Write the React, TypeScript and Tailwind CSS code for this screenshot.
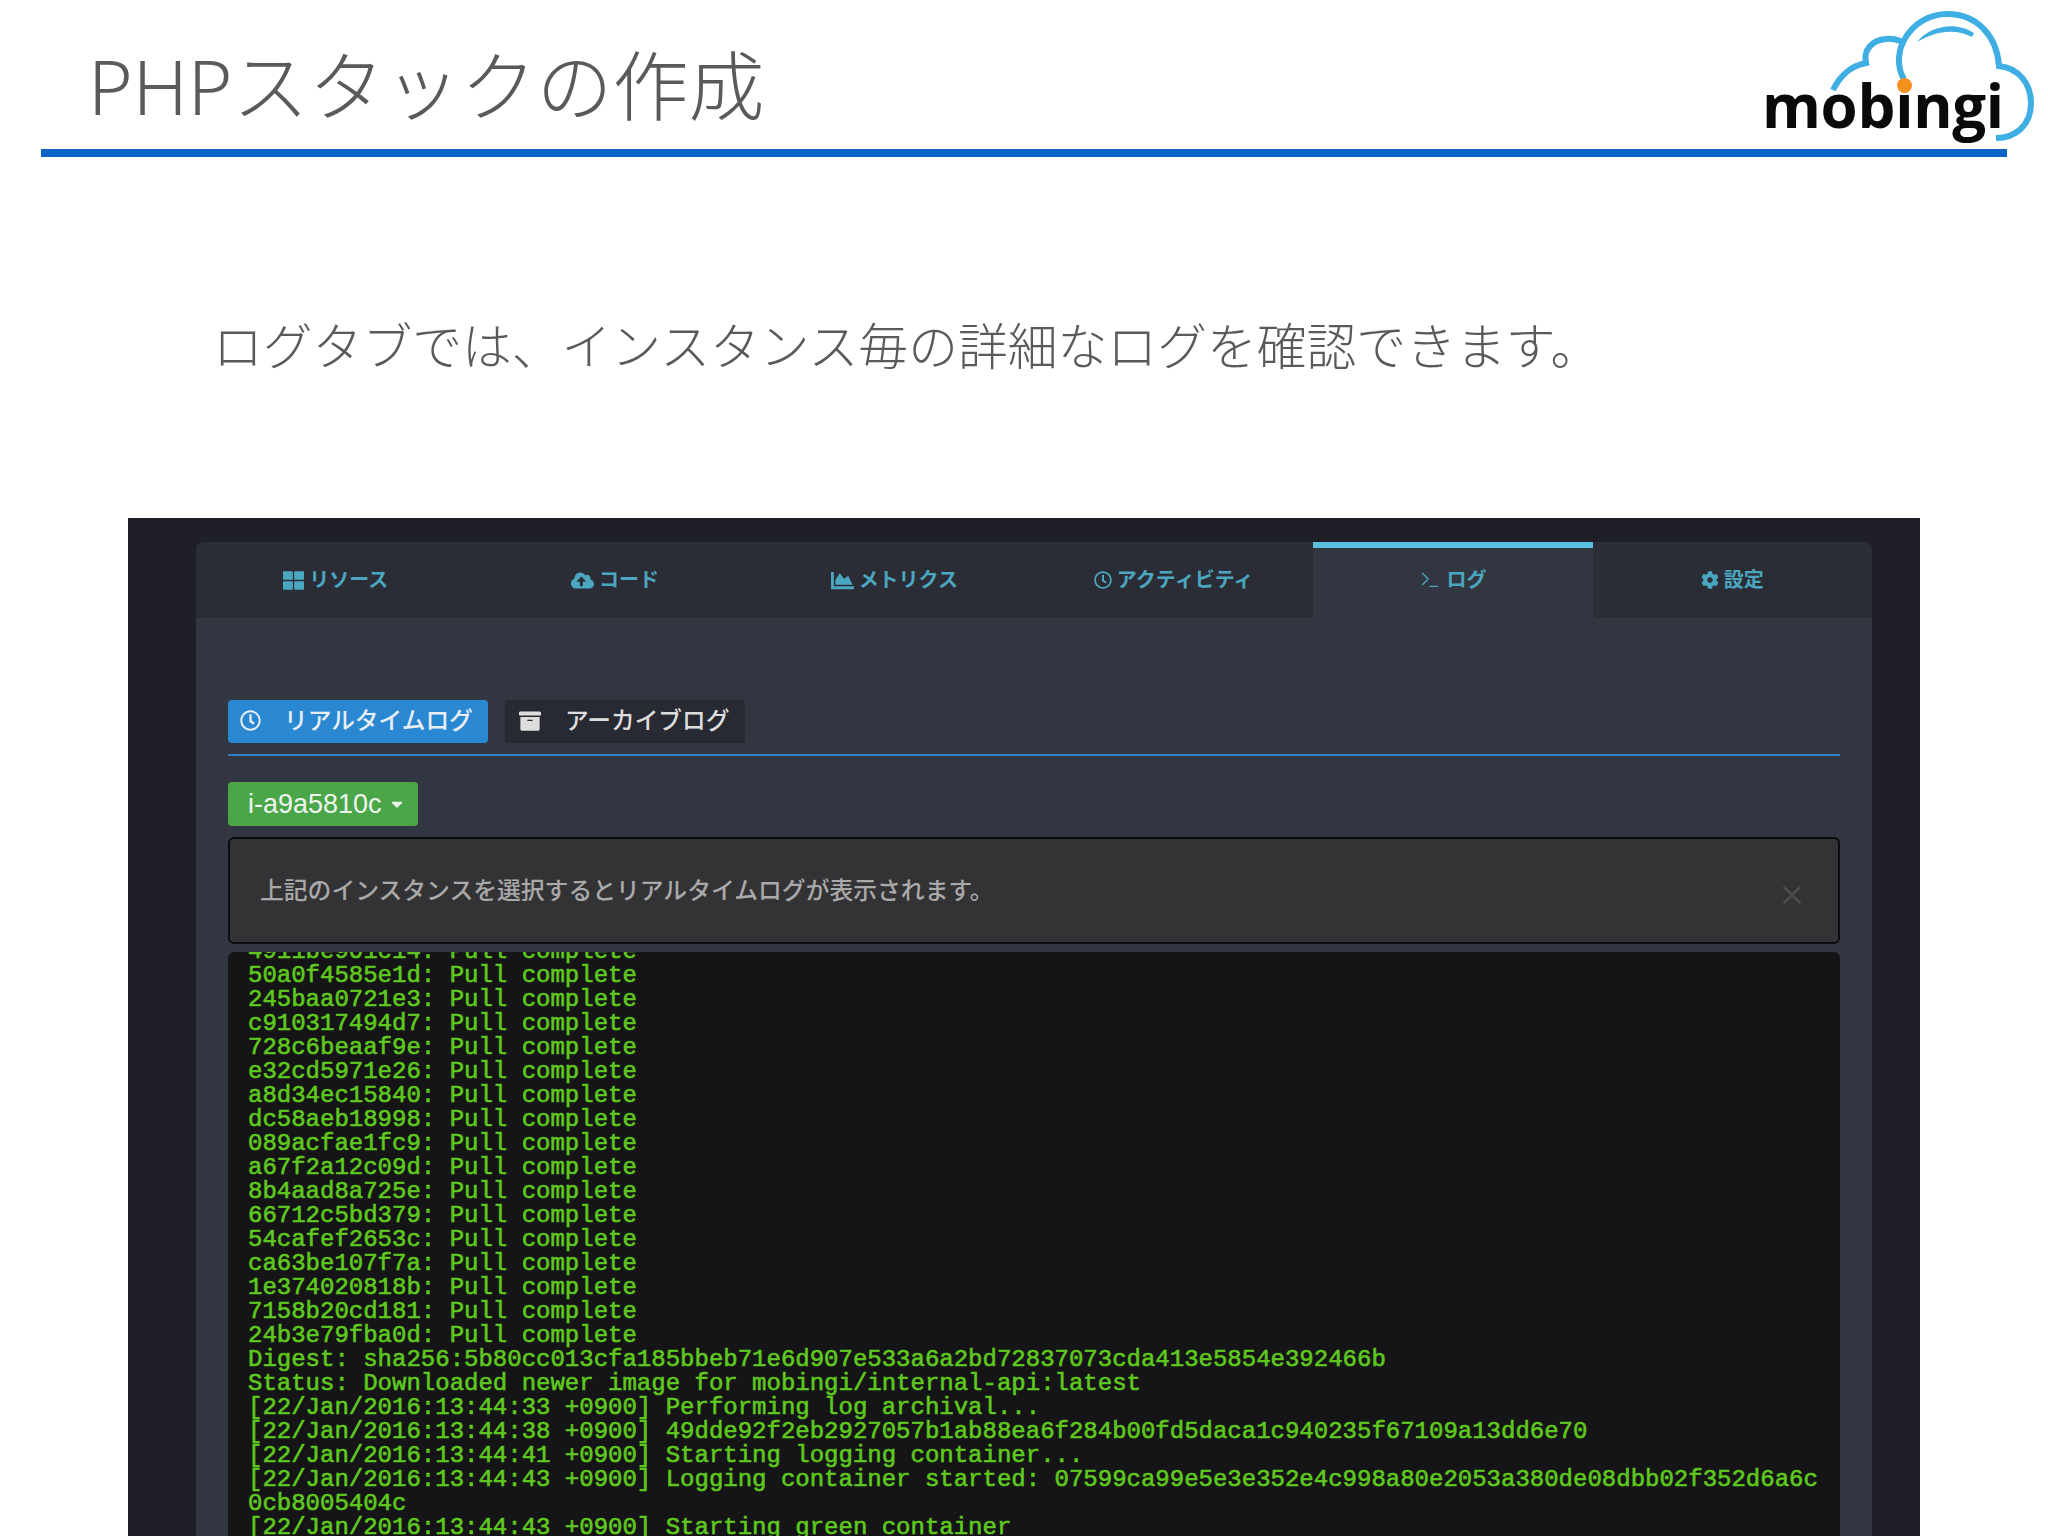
import React from "react";
import { FaThLarge, FaCloudUploadAlt, FaChartArea, FaRegClock, FaCog, FaArchive, FaCaretDown } from "react-icons/fa";
import { Terminal, X } from "lucide-react";

const sans = "font-['Noto_Sans','Noto_Sans_CJK_JP',sans-serif]";

const tabs = [
  { label: "リソース", icon: <FaThLarge className="w-[21px] h-[21px]" /> },
  { label: "コード", icon: <FaCloudUploadAlt className="w-[23px] h-[23px]" /> },
  { label: "メトリクス", icon: <FaChartArea className="w-[23px] h-[23px]" /> },
  { label: "アクティビティ", icon: <FaRegClock className="w-[18px] h-[18px]" /> },
  { label: "ログ", icon: <Terminal className="w-[22px] h-[22px]" strokeWidth={1.5} />, active: true },
  { label: "設定", icon: <FaCog className="w-[18px] h-[18px]" />, last: true },
];

const pulled = [
  "50a0f4585e1d",
  "245baa0721e3",
  "c910317494d7",
  "728c6beaaf9e",
  "e32cd5971e26",
  "a8d34ec15840",
  "dc58aeb18998",
  "089acfae1fc9",
  "a67f2a12c09d",
  "8b4aad8a725e",
  "66712c5bd379",
  "54cafef2653c",
  "ca63be107f7a",
  "1e374020818b",
  "7158b20cd181",
  "24b3e79fba0d",
];

const logLines = [
  "4911be901c14: Pull complete",
  ...pulled.map((id) => `${id}: Pull complete`),
  "Digest: sha256:5b80cc013cfa185bbeb71e6d907e533a6a2bd72837073cda413e5854e392466b",
  "Status: Downloaded newer image for mobingi/internal-api:latest",
  "[22/Jan/2016:13:44:33 +0900] Performing log archival...",
  "[22/Jan/2016:13:44:38 +0900] 49dde92f2eb2927057b1ab88ea6f284b00fd5daca1c940235f67109a13dd6e70",
  "[22/Jan/2016:13:44:41 +0900] Starting logging container...",
  "[22/Jan/2016:13:44:43 +0900] Logging container started: 07599ca99e5e3e352e4c998a80e2053a380de08dbb02f352d6a6c",
  "0cb8005404c",
  "[22/Jan/2016:13:44:43 +0900] Starting green container",
];

const Logo = () => (
  <div className="absolute left-[1700px] top-0 w-[348px] h-[170px]">
    <svg viewBox="0 0 348 170" className="absolute inset-0 w-full h-full" fill="none">
      <path
        d="M133 90C141 74 151 66 166 63C163 50 172 40 186 39C192 38 198 40 203 42C213 22 232 13 250 14C277 15 297 36 299 66C319 68 331 84 331 103C331 125 316 138 296 138"
        stroke="#3eaee3"
        strokeWidth="6"
      />
      <path d="M203 42C197 55 198 70 204 79" stroke="#3eaee3" strokeWidth="6" />
      <path d="M217 42C228 27 255 20 274 33L272 37C255 28 235 31 217 42Z" fill="#3eaee3" />
    </svg>
    <span className="absolute left-[62px] top-[61px] font-['Open_Sans',sans-serif] font-bold text-[60px] leading-[88px] tracking-[-0.3px] text-[#0a0a0a]">
      mobingi
    </span>
    <span className="absolute left-[197px] top-[78px] w-[15px] h-[15px] rounded-full bg-[#f5901e]" />
  </div>
);

const App = () => {
  return (
    <div className={`relative w-[2048px] h-[1536px] overflow-hidden bg-white ${sans}`}>
      <header className="pl-[41px] w-[2007px]">
        <h1 className="h-[149px] pl-[47px] pt-[38px] text-[76px] leading-[96px] font-light text-[#5a5a5a]">
          PHPスタックの作成
        </h1>
        <div className="h-[8px] bg-[#0b63c4]" />
      </header>
      <Logo />

      <p className="pl-[213px] pt-[159px] text-[49.8px] leading-[60px] font-light text-[#5a5a5a]">
        ログタブでは、インスタンス毎の詳細なログを確認できます。
      </p>

      <section className="mt-[142px] ml-[128px] w-[1792px] h-[1100px] bg-[#1f2027] pt-[24px] pl-[68px] pr-[48px]">
        <div className="w-[1676px] h-[1100px] rounded-t-[8px] bg-[#313640] overflow-hidden">
          <nav className="grid grid-cols-6 h-[76px]">
            {tabs.map((t) => (
              <div
                key={t.label}
                className={`flex items-center justify-center gap-[5px] text-[20px] font-bold text-[#4ba6bf] ${
                  t.active ? "border-t-[6px] border-[#5bc0de] pb-[6px]" : "bg-[#2b2d36]"
                } ${t.last ? "rounded-bl-[4px]" : ""}`}
              >
                {t.icon}
                <span>{t.label}</span>
              </div>
            ))}
          </nav>

          <div className="px-[32px] pt-[82px]">
            <div className="flex gap-[17px] h-[43px] text-[23.7px] font-medium">
              <div className="flex items-center w-[260px] pl-[12px] pb-[2px] gap-[23px] rounded-[4px] bg-[#2a88d2] text-[#e8eef4]">
                <FaRegClock className="w-[21px] h-[21px] shrink-0" />
                リアルタイムログ
              </div>
              <div className="flex items-center w-[240px] pl-[14px] pb-[2px] gap-[24px] rounded-[3px] bg-[#282a33] text-[#dddddd]">
                <FaArchive className="w-[22px] h-[22px] shrink-0" />
                アーカイブログ
              </div>
            </div>
            <div className="mt-[11px] h-[2px] bg-[#3380c0]" />

            <div className="mt-[26px] flex items-center w-[190px] h-[44px] pl-[20px] gap-[6px] rounded-[4px] bg-[#4ba649] text-[#eef5ee] text-[27px] font-['Liberation_Sans',sans-serif]">
              i-a9a5810c
              <FaCaretDown className="w-[18px] h-[18px] shrink-0" />
            </div>

            <div className="relative mt-[11px] h-[107px] flex items-center pl-[30px] rounded-[6px] border-[2px] border-[#0c0d10] bg-[#333336] text-[23.8px] font-medium text-[#a9a9a9]">
              上記のインスタンスを選択するとリアルタイムログが表示されます。
              <X className="absolute right-[31px] top-[41px] w-[30px] h-[30px] text-[#4c4c4c]" strokeWidth={2.2} />
            </div>

            <div className="mt-[8px] h-[640px] overflow-hidden rounded-t-[6px] bg-[#151517] pl-[20px]">
              <pre className="-mt-[12px] font-['Liberation_Mono',monospace] text-[24px] leading-[24px] text-[#5fc81e] [-webkit-text-stroke:0.6px_#5fc81e]">
                {logLines.join("\n")}
              </pre>
            </div>
          </div>
        </div>
      </section>
    </div>
  );
};

export default App;
